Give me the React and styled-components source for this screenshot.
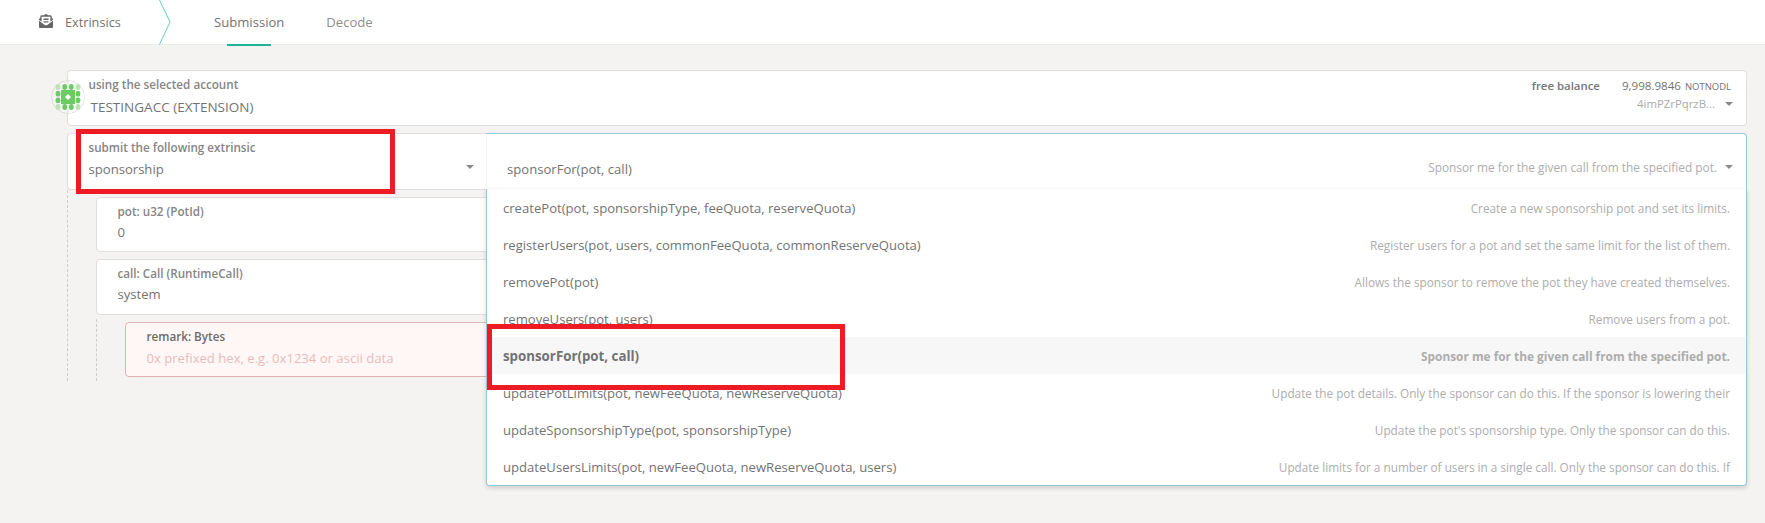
import React from "react";
import styled, { createGlobalStyle, css } from "styled-components";
import { FaEnvelopeOpenText } from "react-icons/fa";

const GlobalStyle = createGlobalStyle`
  * { box-sizing: border-box; }
  body {
    margin: 0;
    background: #f4f3f1;
    color: #737373;
    font: 13.1px/20px "Open Sans", "Noto Sans", sans-serif;
  }
`;

const Page = styled.div`
  position: relative;
  height: 523px;
  overflow: hidden;
`;

const Header = styled.header`
  display: flex;
  height: 45px;
  padding-left: 39px;
  background: #fff;
  border-bottom: 1px solid #ececeb;
`;

const Section = styled.div`
  display: flex;
  align-items: flex-start;
  gap: 12px;
  width: 120px;
  padding-top: 12px;
  font-size: 12.7px;
  svg { margin-top: 2px; color: #666; }
`;

const Chevron = styled.svg`
  display: block;
  width: 13px;
  height: 45px;
  fill: none;
  stroke: #64cdb9;
  stroke-width: 1;
`;

const Tabs = styled.nav`
  display: flex;
  gap: 42px;
  padding-left: 42px;
`;

const Tab = styled.a`
  display: flex;
  flex-direction: column;
  align-items: center;
  height: 46px;
  padding-top: 12px;
  color: ${(p) => (p.$active ? "#737373" : "#8c8c8c")};
  &::after {
    content: "";
    width: 44px;
    height: 2px;
    margin-top: 12px;
    background: ${(p) => (p.$active ? "#1cb39a" : "transparent")};
  }
`;

const Main = styled.main`
  padding: 25px 18px 0 67px;
`;

const Card = styled.div`
  height: ${(p) => p.$height || 56}px;
  padding: 6px 17px 0 20.5px;
  background: #fff;
  border: 1px solid #dededd;
  border-radius: 4px;
  ${(p) =>
    p.$invalid &&
    css`
      background: #fff6f6;
      border-color: #e0b4b4;
    `}
`;

const Label = styled.div`
  font-size: 11.68px;
  font-weight: 600;
  line-height: 16px;
  color: ${(p) => (p.$dark ? "#6b6b6b" : "#858585")};
`;

const Value = styled.div`
  margin-top: ${(p) => p.$gap ?? 3}px;
  color: ${(p) => (p.$placeholder ? "#e7bdbc" : "#737373")};
`;

const AccountCard = styled(Card)`
  display: flex;
  justify-content: space-between;
  padding-right: 13px;
`;

const AccountName = styled.div`
  margin: 4px 0 0 2px;
  font-size: 13.52px;
`;

const Identicon = styled.svg`
  position: absolute;
  left: 51px;
  top: 80px;
`;

const Balance = styled.div`
  display: grid;
  justify-items: end;
  align-content: start;
`;

const BalanceLine = styled.div`
  display: flex;
  align-items: baseline;
  margin-top: 1px;
  padding-right: 2px;
  font-size: 11.6px;
  line-height: 16px;
  b { margin-right: 22px; font-size: 11.4px; font-weight: 600; color: #777; }
  small { margin-left: 4px; font-size: 9.47px; }
`;

const AddressLine = styled.div`
  display: flex;
  align-items: center;
  gap: 10px;
  margin-top: 1px;
  font-size: 11.37px;
  line-height: 16px;
  color: #aaa;
`;

const Caret = styled.i`
  width: 0;
  height: 0;
  border: solid transparent;
  border-width: 4px 4px 0;
  border-top-color: #8a8a8a;
`;

const ExtrinsicRow = styled.div`
  display: flex;
  height: 57px;
  margin-top: 7px;
`;

const SectionSelect = styled(Card)`
  display: flex;
  justify-content: space-between;
  align-items: flex-start;
  width: 419px;
  padding-right: 12px;
  border-right: 0;
  border-radius: 4px 0 0 4px;
  ${Caret} { margin-top: 25px; }
`;

const MethodSelect = styled.div`
  position: relative;
  z-index: 1;
  flex: 1;
  background: #fff;
  border: solid #96c8da;
  border-width: 1px 1px 0 0;
  border-radius: 0 4px 0 0;
`;

const Current = styled.div`
  display: flex;
  height: 55px;
  padding: 25px 13px 0 20px;
  border-left: 1px solid #f5f5f5;
  border-bottom: 1px solid #fcfcfc;
  ${Caret} { margin: 6px 0 0 8px; }
`;

const Signature = styled.span`
  flex: 1;
`;

const Description = styled.span`
  font-size: 11.79px;
  color: #adadad;
`;

const CurrentDescription = styled(Description)`
  margin-top: -2px;
  font-size: 11.87px;
`;

const Menu = styled.div`
  position: absolute;
  top: 55px;
  left: 0;
  right: -1px;
  background: #fff;
  border: solid #96c8da;
  border-width: 0 1px 1px;
  border-radius: 0 0 4px 4px;
  box-shadow: 0 2px 4px rgba(34, 36, 38, 0.18);
`;

const Option = styled.div`
  display: flex;
  align-items: baseline;
  height: 37px;
  padding: 9px 16px 0;
  ${(p) =>
    p.$selected &&
    css`
      background: #f7f7f7;
      font-weight: 700;
      font-size: 13.3px;
      ${Description} { font-size: 11.86px; }
    `}
`;

const Params = styled.div`
  padding: 7px 0 4px 28px;
  border-left: 1px dashed #cdcdcc;
`;

const NestedParams = styled(Params)`
  margin-top: 4px;
  padding-top: 3px;
  margin-bottom: -4px;
`;

const Stack = styled.div`
  display: grid;
  gap: 7px;
`;

const Highlight = styled.div`
  position: absolute;
  z-index: 2;
  left: ${(p) => p.$x}px;
  top: ${(p) => p.$y}px;
  width: ${(p) => p.$w}px;
  height: ${(p) => p.$h}px;
  border: 5px solid #ed1c24;
`;

const methods = [
  ["createPot(pot, sponsorshipType, feeQuota, reserveQuota)", "Create a new sponsorship pot and set its limits."],
  ["registerUsers(pot, users, commonFeeQuota, commonReserveQuota)", "Register users for a pot and set the same limit for the list of them."],
  ["removePot(pot)", "Allows the sponsor to remove the pot they have created themselves."],
  ["removeUsers(pot, users)", "Remove users from a pot."],
  ["sponsorFor(pot, call)", "Sponsor me for the given call from the specified pot."],
  ["updatePotLimits(pot, newFeeQuota, newReserveQuota)", "Update the pot details. Only the sponsor can do this. If the sponsor is lowering their"],
  ["updateSponsorshipType(pot, sponsorshipType)", "Update the pot's sponsorship type. Only the sponsor can do this."],
  ["updateUsersLimits(pot, newFeeQuota, newReserveQuota, users)", "Update limits for a number of users in a single call. Only the sponsor can do this. If"],
];

const grid = [-10, -3.3, 3.3, 10];

function AccountIcon() {
  return (
    <Identicon width="34" height="34" viewBox="-17 -17 34 34">
      <circle r="16.4" fill="#f5f4f3" stroke="#dcdcdc" />
      <path d="M0-16A16 16 0 0 1 0 16Z" fill="#fff" />
      <path d="M0-16V16" stroke="#dededd" />
      {grid.map((x) =>
        grid.map((y) => {
          const outerX = Math.abs(x) > 5;
          const outerY = Math.abs(y) > 5;
          if (!outerX && !outerY) return null;
          return (
            <ellipse key={`${x},${y}`} cx={x} cy={y} rx="2.4" ry="2.9" fill={outerX && outerY ? "#b9e5b2" : "#6ccb62"} />
          );
        })
      )}
      <rect x="-7" y="-7" width="14" height="14" fill="#6ccb62" />
      <path d="M0-2.8L2.8 0 0 2.8-2.8 0Z" fill="#fff" stroke="#fff" strokeWidth=".4" />
    </Identicon>
  );
}

export default function App() {
  return (
    <Page>
      <GlobalStyle />
      <Header>
        <Section>
          <FaEnvelopeOpenText size={14} />
          Extrinsics
        </Section>
        <Chevron viewBox="0 0 13 45">
          <path d="M0.5 0L11 22L0.5 44.5" />
        </Chevron>
        <Tabs>
          <Tab $active>Submission</Tab>
          <Tab>Decode</Tab>
        </Tabs>
      </Header>
      <Main>
        <AccountCard>
          <div>
            <Label>using the selected account</Label>
            <AccountName>TESTINGACC (EXTENSION)</AccountName>
          </div>
          <Balance>
            <BalanceLine>
              <b>free balance</b>
              <span>9,998.9846</span>
              <small>NOTNODL</small>
            </BalanceLine>
            <AddressLine>
              4imPZrPqrzB...
              <Caret />
            </AddressLine>
          </Balance>
        </AccountCard>
        <AccountIcon />
        <ExtrinsicRow>
          <SectionSelect $height={57}>
            <div>
              <Label>submit the following extrinsic</Label>
              <Value>sponsorship</Value>
            </div>
            <Caret />
          </SectionSelect>
          <MethodSelect>
            <Current>
              <Signature>sponsorFor(pot, call)</Signature>
              <CurrentDescription>Sponsor me for the given call from the specified pot.</CurrentDescription>
              <Caret />
            </Current>
            <Menu>
              {methods.map(([name, text]) => (
                <Option key={name} $selected={name === "sponsorFor(pot, call)"}>
                  <Signature>{name}</Signature>
                  <Description>{text}</Description>
                </Option>
              ))}
            </Menu>
          </MethodSelect>
        </ExtrinsicRow>
        <Params>
          <Stack>
            <Card $height={55}>
              <Label>pot: u32 (PotId)</Label>
              <Value $gap={2}>0</Value>
            </Card>
            <Card>
              <Label>call: Call (RuntimeCall)</Label>
              <Value $gap={2}>system</Value>
            </Card>
          </Stack>
          <NestedParams>
            <Card $height={55} $invalid>
              <Label $dark>remark: Bytes</Label>
              <Value $placeholder>0x prefixed hex, e.g. 0x1234 or ascii data</Value>
            </Card>
          </NestedParams>
        </Params>
      </Main>
      <Highlight $x={76} $y={129} $w={319} $h={65} />
      <Highlight $x={487} $y={324} $w={358} $h={66} />
    </Page>
  );
}
